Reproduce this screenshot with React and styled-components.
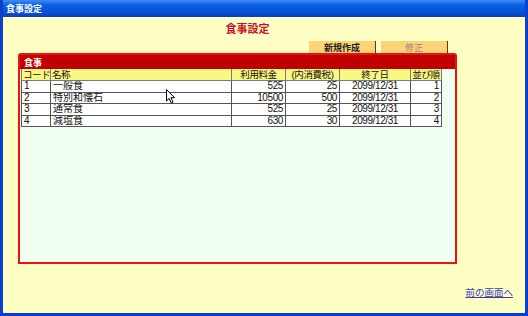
import React from "react";
import styled, { createGlobalStyle } from "styled-components";

const GlobalStyle = createGlobalStyle`
  html, body {
    margin: 0;
    padding: 0;
    background: #ffffc4;
  }
  body {
    font-family: "Liberation Sans", "Noto Sans CJK JP", sans-serif;
  }
`;

const Window = styled.div`
  position: relative;
  width: 528px;
  height: 316px;
  box-sizing: border-box;
  display: flex;
  flex-direction: column;
  border: 3px solid #0b3fd0;
  border-top: none;
  background: #ffffc4;
  overflow: hidden;
`;

const TitleBar = styled.div`
  height: 17px;
  margin: 0 -3px;
  padding-left: 6px;
  display: flex;
  align-items: center;
  background: linear-gradient(#3d8cf5 0%, #0a5fe0 30%, #0751d6 75%, #0a3fb8 100%);
  color: #fff;
  font-family: "Noto Sans CJK JP", sans-serif;
  font-size: 9px;
  font-weight: bold;
`;

const Body = styled.div`
  flex: 1;
  display: flex;
  flex-direction: column;
  padding-left: 15px;
`;

const Heading = styled.div`
  width: 459px;
  margin-top: 3px;
  text-align: center;
  line-height: 16px;
  font-family: "Noto Sans CJK JP", sans-serif;
  font-size: 11px;
  font-weight: bold;
  color: #c8102e;
`;

const ButtonRow = styled.div`
  width: 430px;
  margin-top: 5px;
  display: flex;
  justify-content: flex-end;
  gap: 5px;
`;

const TabButton = styled.div`
  width: 66px;
  height: 12px;
  display: flex;
  align-items: center;
  justify-content: center;
  background: #fdd37a;
  border-right: 1px solid #5a3a10;
  font-family: "Noto Sans CJK JP", sans-serif;
  font-size: 9px;
  font-weight: ${(p) => (p.$disabled ? "normal" : "bold")};
  color: ${(p) => (p.$disabled ? "#9a8a70" : "#222")};
`;

const Panel = styled.div`
  width: 439px;
  height: 211px;
  box-sizing: border-box;
  border: 2px solid #f01010;
  border-radius: 3px 3px 0 0;
  background: #f1fff0;
  display: flex;
  flex-direction: column;
`;

const PanelHeader = styled.div`
  height: 14px;
  padding-left: 4px;
  display: flex;
  align-items: center;
  background: #c00000;
  color: #fff;
  font-family: "Noto Sans CJK JP", sans-serif;
  font-size: 9px;
  font-weight: bold;
`;

const Table = styled.table`
  margin-left: 1px;
  border-collapse: collapse;
  table-layout: fixed;
  width: 420px;
  font-size: 10px;
  color: #111;
`;

const Th = styled.th`
  height: 11px;
  padding: 0 1px;
  border: 1px solid #7a7a7a;
  border-top: none;
  background: #f8f882;
  font-size: 9.5px;
  font-weight: normal;
  line-height: 11px;
  letter-spacing: -0.4px;
  text-align: ${(p) => p.$align || "center"};
  white-space: nowrap;
  overflow: hidden;
`;

const Td = styled.td`
  height: 10.5px;
  padding: 0 2px;
  border: 1px solid #555;
  background: #fff;
  line-height: 10.5px;
  text-align: ${(p) => p.$align || "left"};
  letter-spacing: ${(p) => (p.$num ? "-0.4px" : "0")};
  white-space: nowrap;
  overflow: hidden;
`;

const Footer = styled.div`
  margin-top: 21px;
  display: flex;
  justify-content: flex-end;
  padding-right: 12px;
`;

const BackLink = styled.a`
  font-family: "Noto Sans CJK JP", sans-serif;
  font-size: 9.5px;
  line-height: 14px;
  color: #3a3ab8;
  text-decoration: underline;
`;

const Cursor = styled.svg`
  position: absolute;
  left: 163px;
  top: 89px;
`;

const columns = [
  { label: "コード", width: 29, align: "left" },
  { label: "名称", width: 181, align: "left" },
  { label: "利用料金", width: 54, align: "right" },
  { label: "(内消費税)", width: 54, align: "right" },
  { label: "終了日", width: 71, align: "center" },
  { label: "並び順", width: 31, align: "right" },
];

const meals = [
  { code: "1", name: "一般食", price: 525, tax: 25, end: "2099/12/31", order: 1 },
  { code: "2", name: "特別和懐石", price: 10500, tax: 500, end: "2099/12/31", order: 2 },
  { code: "3", name: "通常食", price: 525, tax: 25, end: "2099/12/31", order: 3 },
  { code: "4", name: "減塩食", price: 630, tax: 30, end: "2099/12/31", order: 4 },
];

const App = () => {
  return (
    <>
      <GlobalStyle />
      <Window>
        <TitleBar>食事設定</TitleBar>
        <Body>
          <Heading>食事設定</Heading>
          <ButtonRow>
            <TabButton>新規作成</TabButton>
            <TabButton $disabled>修正</TabButton>
          </ButtonRow>
          <Panel>
            <PanelHeader>食事</PanelHeader>
            <Table>
              <colgroup>
                {columns.map((c) => (
                  <col key={c.label} style={{ width: c.width }} />
                ))}
              </colgroup>
              <thead>
                <tr>
                  {columns.map((c, i) => (
                    <Th key={c.label} $align={i < 2 ? "left" : "center"}>
                      {c.label}
                    </Th>
                  ))}
                </tr>
              </thead>
              <tbody>
                {meals.map((m) => (
                  <tr key={m.code}>
                    <Td>{m.code}</Td>
                    <Td>{m.name}</Td>
                    <Td $align="right" $num>{m.price}</Td>
                    <Td $align="right" $num>{m.tax}</Td>
                    <Td $align="center" $num>{m.end}</Td>
                    <Td $align="right" $num>{m.order}</Td>
                  </tr>
                ))}
              </tbody>
            </Table>
          </Panel>
          <Footer>
            <BackLink href="#">前の画面へ</BackLink>
          </Footer>
        </Body>
        <Cursor width="10" height="16" viewBox="0 0 10 16">
          <path d="M0.5 0.5 L0.5 12 L3.2 9.4 L5.2 14 L7 13.2 L5 8.7 L8.6 8.7 Z" fill="#fff" stroke="#000" strokeWidth="1" />
        </Cursor>
      </Window>
    </>
  );
};

export default App;
